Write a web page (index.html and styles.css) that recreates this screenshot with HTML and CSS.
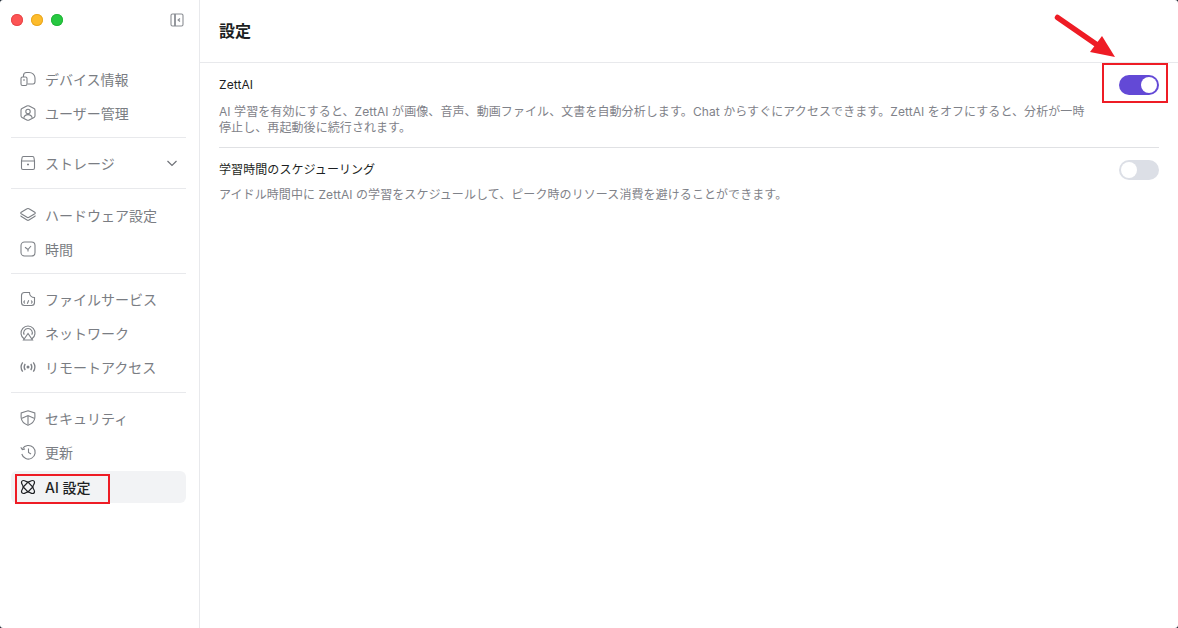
FILE: index.html
```html
<!DOCTYPE html>
<html lang="ja">
<head>
  <meta charset="UTF-8" />
  <meta name="viewport" content="width=device-width, initial-scale=1.0" />
  <title>設定</title>
  <link rel="stylesheet" href="styles.css">
</head>
<body>
  <div class="window">
    <aside class="sidebar">
      <div class="titlebar">
        <div class="lights">
          <span class="light red"></span>
          <span class="light yellow"></span>
          <span class="light green"></span>
        </div>
        <svg class="collapse" width="14" height="14" viewBox="0 0 14 14" fill="none" stroke="#8a8d93" stroke-width="1.1"><rect x="1" y="1" width="12" height="12" rx="1.5"/><path d="M5 1v12" stroke-width="1.8"/><path d="M10 5.500 8.200 7 10 8.500" stroke-width="1.300"/></svg>
      </div>

      <nav class="nav">
        <div class="group">
          <a class="item"><svg class="icon" viewBox="0 0 16 16"><path d="M3.500 6V4.500C3.500 2.500 4.800 1.500 6.500 1.500H9c3.500 0 6 2.500 6 5.500v3.500c0 1.500-.8 2.500-2 2.500H7.500"/><rect x="1" y="6" width="6" height="8.500" rx="1.500"/><path d="M3 9h2"/></svg>デバイス情報</a>
          <a class="item"><svg class="icon" viewBox="0 0 16 16"><path d="M6.800 1 2 3.500c-.6.3-1 1-1 1.700v5.600c0 .7.4 1.400 1 1.700L6.800 15c.8.400 1.600.400 2.400 0L14 12.500c.6-.3 1-1 1-1.700V5.200c0-.7-.4-1.400-1-1.700L9.200 1C8.400.6 7.600.6 6.800 1z"/><circle cx="8" cy="6.500" r="2.200"/><path d="M3.800 12.800c.5-2 2-3.200 4.200-3.200s3.700 1.200 4.200 3.200"/></svg>ユーザー管理</a>
        </div>
        <div class="group storage">
          <a class="item"><svg class="icon" viewBox="0 0 16 16"><path d="M3.500 1.500h9c.8 0 1.500.7 1.500 1.500l.5 3v7c0 .8-.7 1.500-1.500 1.500H3c-.8 0-1.500-.7-1.500-1.500V6L2 3c0-.8.7-1.500 1.500-1.500z"/><path d="M1.500 6h13"/><path d="M7 9.500h2" stroke-width="1.500"/></svg>ストレージ<svg class="chevron" width="12" height="12" viewBox="0 0 12 12" fill="none" stroke="#6f7278" stroke-width="1.200"><path d="M1.500 4 6 8.500 10.500 4"/></svg></a>
        </div>
        <div class="group">
          <a class="item"><svg class="icon" viewBox="0 0 16 16"><path d="M7 1.800c.6-.4 1.400-.4 2 0l5.800 3.500c.6.4.6 1.100 0 1.500L9 10.300c-.6.4-1.400.4-2 0L1.200 6.800c-.6-.4-.6-1.100 0-1.500z"/><path d="M.8 8.500c0 .5.200.9.600 1.100L7 13c.6.400 1.400.400 2 0l5.600-3.400c.4-.2.600-.6.600-1.100"/></svg>ハードウェア設定</a>
          <a class="item"><svg class="icon" viewBox="0 0 16 16"><rect x="1" y="1" width="14" height="14" rx="3.500"/><path d="M5 6.200 8 8.500l3-3.500M8 8.500V10.500"/></svg>時間</a>
        </div>
        <div class="group">
          <a class="item"><svg class="icon" viewBox="0 0 16 16"><path d="M9.500 1.500H4.500c-1.700 0-3 1.300-3 3v7c0 1.700 1.300 3 3 3h7c1.700 0 3-1.300 3-3v-5c-2.800 0-5-2.200-5-5z"/><path d="M4.800 9.500 3.800 11l1 1.500M11.200 9.500l1 1.500-1 1.500M8.700 9.300 7.300 12.700"/></svg>ファイルサービス</a>
          <a class="item"><svg class="icon" viewBox="0 0 16 16"><path d="M4 13.800a7 7 0 1 1 8 0"/><path d="M4.200 9.800a4.300 4.300 0 1 1 7.600 0"/><path d="M8 8.500 3.500 15h9z"/></svg>ネットワーク</a>
          <a class="item"><svg class="icon icon-bold" viewBox="0 0 16 16"><circle class="dot" cx="8" cy="8" r="1.500"/><path d="M5.200 4.800c-1.300 2-1.300 4.400 0 6.400M10.800 4.800c1.300 2 1.300 4.400 0 6.400M2.700 3.300c-2 2.900-2 6.500 0 9.400M13.300 3.300c2 2.900 2 6.500 0 9.400"/></svg>リモートアクセス</a>
        </div>
        <div class="group last">
          <a class="item"><svg class="icon" viewBox="0 0 16 16"><path d="M8 .8 14.800 3c.1 1.500.2 3.500 0 5-.4 3.400-3 5.900-6.800 7.300C4.200 13.900 1.600 11.400 1.200 8c-.2-1.500-.1-3.500 0-5z"/><path d="M8 14.500V5.500M2 8.300 8 5.500l6 2.800"/></svg>セキュリティ</a>
          <a class="item"><svg class="icon" viewBox="0 0 16 16"><path d="M2.500 4.800A6.800 6.800 0 1 1 1.800 10"/><path d="M.8 3.200l1.500 2.500 2.700-.8"/><path d="M8.500 4.500V8.500l2.500 1.500"/></svg>更新</a>
          <a class="item active"><svg class="icon icon-ai" viewBox="0 0 16 16"><path d="M3.500 1.500C5.300 1.500 6.200 3.200 8 3.200s2.700-1.700 4.500-1.700c1.200 0 2 .8 2 2 0 1.800-1.700 2.700-1.700 4.500s1.700 2.700 1.700 4.500c0 1.200-.8 2-2 2-1.800 0-2.700-1.700-4.500-1.700s-2.700 1.700-4.500 1.700c-1.200 0-2-.8-2-2 0-1.800 1.700-2.700 1.700-4.500S1.500 5.300 1.500 3.500c0-1.200.8-2 2-2z"/><path d="M8 3.200 12.800 8 8 12.800 3.200 8z"/></svg>AI 設定<span class="mark"></span></a>
        </div>
      </nav>
    </aside>

    <main class="main">
      <header class="header">設定</header>
      <div class="settings">
        <section class="row first">
          <div class="row-text">
            <h3>ZettAI</h3>
            <p>AI 学習を有効にすると、ZettAI が画像、音声、動画ファイル、文書を自動分析します。Chat からすぐにアクセスできます。ZettAI をオフにすると、分析が一時停止し、再起動後に続行されます。</p>
          </div>
          <div class="toggle-wrap">
            <span class="toggle on"></span>
            <span class="mark-toggle"></span>
          </div>
        </section>
        <section class="row second">
          <div class="row-text">
            <h3>学習時間のスケジューリング</h3>
            <p>アイドル時間中に ZettAI の学習をスケジュールして、ピーク時のリソース消費を避けることができます。</p>
          </div>
          <div class="toggle-wrap">
            <span class="toggle"></span>
          </div>
        </section>
      </div>
      <svg class="arrow" width="70" height="60" viewBox="0 0 70 60"><path d="M3.500 5.500 44 33.500" stroke="#ee1c25" stroke-width="5.500" stroke-linecap="round"/><path d="M61 45 36 40 48 24z" fill="#ee1c25"/></svg>
    </main>
  </div>
</body>
</html>
```

FILE: styles.css
```css
* { box-sizing: border-box; }
html, body { height: 100%; }
body { margin: 0; background: #16202c; color: #1d1f23; font-family: Inter, "Noto Sans CJK JP", sans-serif; overflow: hidden; }
.window { display: flex; height: 628px; background: #fff; border-radius: 3px; overflow: hidden; }

.sidebar { width: 200px; flex: none; border-right: 1px solid #e8e9ec; padding: 0 13px 0 11px; }
.titlebar { display: flex; align-items: center; justify-content: space-between; height: 40px; padding-right: 1px; }
.lights { display: flex; gap: 8px; }
.light { width: 12px; height: 12px; border-radius: 50%; }
.red { background: #fd5454; box-shadow: inset 0 0 0 1px #e8484c; }
.yellow { background: #fdbc2c; box-shadow: inset 0 0 0 1px #e9a823; }
.green { background: #27c841; box-shadow: inset 0 0 0 1px #24b63a; }
.collapse { margin-right: 1px; }

.nav { padding-top: 24px; }
.group { padding-bottom: 7px; margin-bottom: 10px; border-bottom: 1px solid #e8e9ec; }
.group.storage { padding-bottom: 8px; margin-bottom: 11px; }
.group:nth-child(4) { padding-bottom: 8px; }
.group.last { border-bottom: 0; margin: 0; padding: 0; }
.item { position: relative; display: flex; align-items: center; height: 32px; margin-bottom: 2px; padding: 0 8px 2px 9px; border-radius: 6px; color: #7a7d83; font-size: 14px; }
.item:last-child { margin-bottom: 0; }
.icon { width: 16px; height: 16px; flex: none; margin-right: 9px; fill: none; stroke: #7d8086; stroke-width: 1.1; overflow: visible; }
.icon-bold { stroke-width: 1.3; }
.dot { fill: #7d8086; stroke: none; }
.chevron { margin-left: auto; }
.active { padding-bottom: 0; background: #f2f3f5; color: #1d1f23; font-weight: 500; }
.active .icon { stroke: #1d1f23; }
.icon-ai { stroke-width: 1.2; }
.mark { position: absolute; left: 4px; top: 3px; width: 95px; height: 30px; border: 2px solid #ee1c25; }

.main { position: relative; flex: 1; }
.header { height: 63px; padding: 1px 19px 0; border-bottom: 1px solid #e8e9ec; font-size: 16px; font-weight: 600; line-height: 61px; color: #1d1f23; }
.settings { padding: 0 19px; }
.row { display: flex; justify-content: space-between; }
.first { height: 85px; padding-top: 13px; border-bottom: 1px solid #e0e1e4; }
.second { padding-top: 12px; }
.row-text { width: 870px; letter-spacing: 0.08px; }
.row h3 { margin: 0; font-size: 12px; font-weight: 400; line-height: 18px; color: #1d1f23; }
.second h3 { margin-top: 1px; }
.row p { margin: 10px 0 0; font-size: 12px; line-height: 16px; color: #7f8289; }
.second p { margin-top: 8px; }
.toggle-wrap { position: relative; }
.toggle { display: block; position: relative; width: 40px; height: 20px; border-radius: 10px; background: #dcdfe6; }
.toggle::after { content: ""; position: absolute; top: 2px; left: 2px; width: 16px; height: 16px; border-radius: 50%; background: #fff; }
.toggle.on { margin-top: -1px; background: #6349d6; }
.toggle.on::after { left: 22px; }
.mark-toggle { position: absolute; left: -17px; top: -13px; width: 66px; height: 40px; border: 2px solid #ee1c25; }
.arrow { position: absolute; left: 854px; top: 12px; }
```
